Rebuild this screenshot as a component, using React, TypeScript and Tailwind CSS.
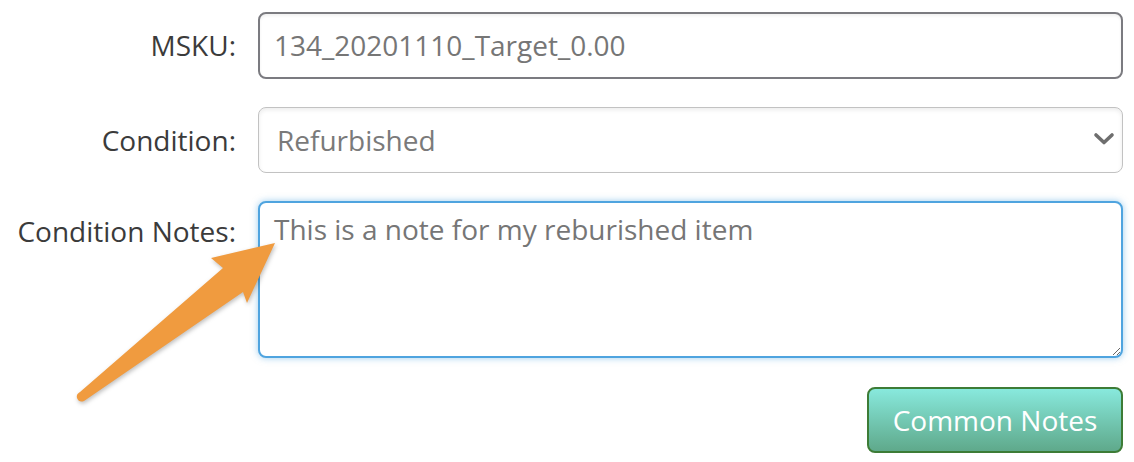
const font = { fontFamily: '"Open Sans", "Noto Sans", sans-serif' }

export default function App() {
  return (
    <div className="relative w-[1134px] h-[462px] bg-white overflow-hidden" style={font}>
      <div className="grid grid-cols-[236px_1fr] gap-x-[22px] pt-[12px] pr-[11px] text-[28px]">
        {/* MSKU */}
        <label className="flex items-center justify-end h-[67px] pb-[1px] text-[#3b3b3b]">MSKU:</label>
        <div className="h-[67px] rounded-[8px] border-2 border-[#7b7b80] bg-white shadow-[inset_0_2px_3px_rgba(0,0,0,0.06)] flex items-center pl-[14px] pb-[1px] text-[#767676]">
          134_20201110_Target_0.00
        </div>

        {/* Condition */}
        <label className="mt-[28px] flex items-center justify-end h-[66px] text-[#3b3b3b]">Condition:</label>
        <div className="mt-[28px] h-[66px] rounded-[8px] border-[1.5px] border-[#c2c2c2] bg-white shadow-[inset_0_2px_4px_rgba(0,0,0,0.08)] flex items-center justify-between pl-[18px] pr-[7px] text-[#7a7a7a]">
          <span>Refurbished</span>
          <svg width="22" height="14" viewBox="0 0 22 14" className="mt-[-2px]">
            <path d="M3 3 L11 10.5 L19 3" fill="none" stroke="#6e6e6e" strokeWidth="3.6" strokeLinecap="round" strokeLinejoin="round" />
          </svg>
        </div>

        {/* Condition Notes */}
        <label className="mt-[28px] pt-[11px] flex justify-end leading-[38px] text-[#3b3b3b]">Condition Notes:</label>
        <textarea
          className="mt-[28px] h-[157px] rounded-[8px] border-2 border-[#4fa4df] bg-white shadow-[0_0_7px_rgba(79,164,223,0.55)] pl-[14px] pt-[7px] leading-[38px] text-[#767676] outline-none resize"
          defaultValue="This is a note for my reburished item"
        />

        {/* Button */}
        <div />
        <div className="mt-[29px] flex justify-end">
          <button className="w-[256px] h-[66px] rounded-[8px] border-2 border-[#3d7c36] bg-gradient-to-b from-[#88e9dd] to-[#5fa98b] text-white">
            Common Notes
          </button>
        </div>
      </div>

      {/* Arrow annotation */}
      <svg
        className="absolute left-0 top-0 pointer-events-none"
        width="1134"
        height="462"
        style={{ filter: 'drop-shadow(1px 2px 2px rgba(0,0,0,0.25))' }}
      >
        <path
          d="M275 243 L247 303 L243 292 L84 401 Q79 403 77 398 Q76 394 80 392 L223 268 L211 258 Z"
          fill="#f09b3f"
        />
      </svg>
    </div>
  )
}
